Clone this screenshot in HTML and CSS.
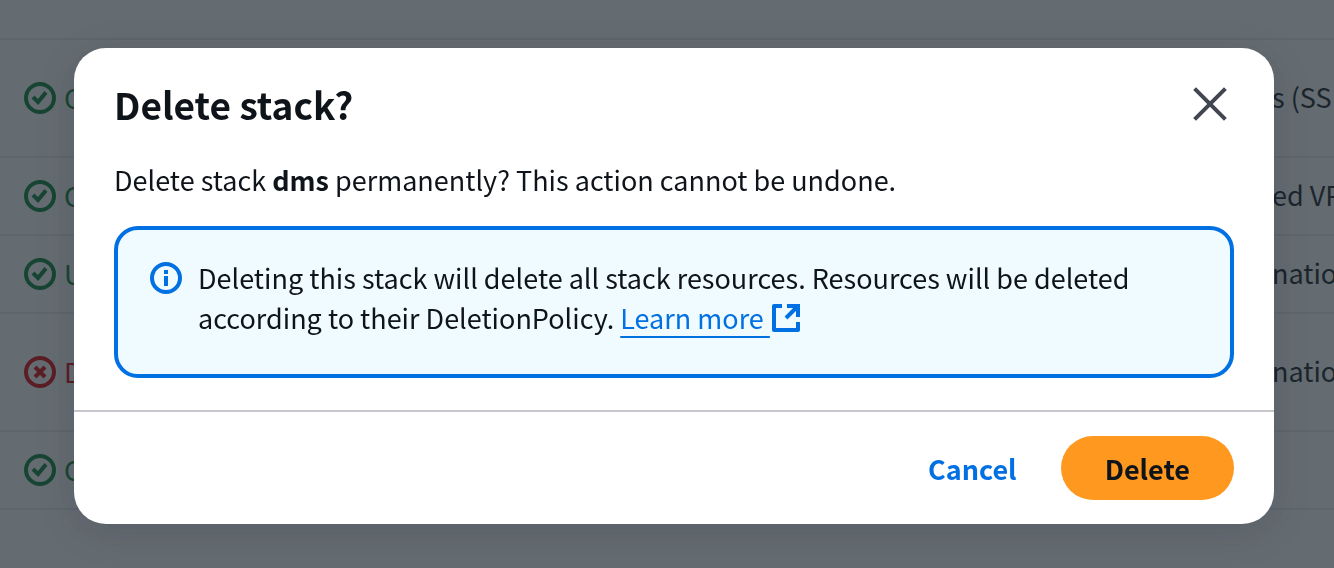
FILE: index.html
```html
<!DOCTYPE html>
<html lang="en">
<head>
    <meta charset="UTF-8">
    <meta name="viewport" content="width=device-width, initial-scale=1.0">
    <title>Delete stack</title>
    <link rel="stylesheet" href="styles.css">
</head>
<body>
    <svg class="sprite" aria-hidden="true">
        <symbol id="icon-success" viewBox="0 0 16 16">
            <circle cx="8" cy="8" r="7" />
            <path d="M4.5 7.5 L7 10 L11 5.2" />
        </symbol>
        <symbol id="icon-error" viewBox="0 0 16 16">
            <circle cx="8" cy="8" r="7" />
            <path d="M5.5 5.5 L10.5 10.5 M10.5 5.5 L5.5 10.5" />
        </symbol>
    </svg>

    <table class="stacks">
        <tbody>
            <tr class="tall">
                <td class="status success"><div><svg class="icon"><use href="#icon-success" /></svg>C</div></td>
                <td class="description">s (SS</td>
            </tr>
            <tr>
                <td class="status success"><div><svg class="icon"><use href="#icon-success" /></svg>C</div></td>
                <td class="description">ed VP</td>
            </tr>
            <tr>
                <td class="status success"><div><svg class="icon"><use href="#icon-success" /></svg>U</div></td>
                <td class="description">natio</td>
            </tr>
            <tr class="tall">
                <td class="status error"><div><svg class="icon"><use href="#icon-error" /></svg>D</div></td>
                <td class="description">natio</td>
            </tr>
            <tr>
                <td class="status success"><div><svg class="icon"><use href="#icon-success" /></svg>C</div></td>
                <td class="description"></td>
            </tr>
        </tbody>
    </table>

    <div class="overlay">
        <div class="modal" role="dialog" aria-modal="true" aria-labelledby="modal-title">
            <div class="modal-header">
                <h1 id="modal-title">Delete stack?</h1>
                <button type="button" class="close" aria-label="Close">
                    <svg class="icon" viewBox="0 0 16 16"><path d="M.3 .3 L15.7 15.7 M15.7 .3 L.3 15.7" /></svg>
                </button>
            </div>
            <div class="modal-body">
                <p>Delete stack <strong>dms</strong> permanently? This action cannot be undone.</p>
                <div class="alert">
                    <svg class="icon" viewBox="0 0 16 16">
                        <circle cx="8" cy="8" r="7" />
                        <path d="M8 4 V6 M8 7 V12" />
                    </svg>
                    <p>Deleting this stack will delete all stack resources. Resources will be deleted according to their DeletionPolicy. <a href="#">Learn more <svg class="external" viewBox="0 0 28 28">
                        <path d="M10 2 H2 V26 H26 V18" stroke-linejoin="round" />
                        <path d="M15 2 H26 V13 M25 3 L14 14" />
                    </svg></a></p>
                </div>
            </div>
            <div class="modal-footer">
                <button type="button" class="btn btn-link">Cancel</button>
                <button type="button" class="btn btn-primary">Delete</button>
            </div>
        </div>
    </div>
</body>
</html>
```
FILE: styles.css
```css
* {
    box-sizing: border-box;
}
body {
    margin: 0;
    min-height: 100vh;
    overflow: hidden;
    font-family: "Noto Sans CJK SC", "Noto Sans", sans-serif;
    font-size: 27px;
    line-height: 40px;
    color: #0f141a;
    background: #fff;
}
h1, p {
    margin: 0;
}
.sprite {
    display: none;
}
.icon {
    flex: none;
    width: 32px;
    height: 32px;
    fill: none;
    stroke: currentColor;
    stroke-width: 2;
}

/* stack list behind the dialog */
.stacks {
    width: 100%;
    margin-top: 38px;
    border-top: 2px solid #ebebf0;
    border-spacing: 0;
    table-layout: fixed;
}
.stacks td {
    height: 78px;
    padding: 0;
    border-bottom: 2px solid #ebebf0;
    white-space: nowrap;
    overflow: hidden;
}
.stacks .tall td {
    height: 118px;
}
.status div {
    display: flex;
    align-items: center;
    gap: 8px;
    padding-left: 24px;
}
.success {
    color: #00802f;
}
.error {
    color: #db0000;
}
.stacks .description {
    width: 62px;
    padding-bottom: 2px;
}

/* dialog */
.overlay {
    position: fixed;
    inset: 0;
    padding: 48px 60px 44px 74px;
    background: rgba(34, 44, 53, 0.7);
}
.modal {
    background: #fff;
    border-radius: 32px;
    box-shadow: 0 8px 40px rgba(0, 7, 22, 0.12);
}
.modal-header {
    display: flex;
    justify-content: space-between;
    align-items: center;
    padding: 32px 40px 24px;
}
.modal-header h1 {
    font-size: 37px;
    line-height: 48px;
}
.close {
    display: flex;
    padding: 8px;
    border: none;
    background: none;
    color: #424650;
    cursor: pointer;
}
.close .icon {
    overflow: visible;
}
.modal-body {
    padding: 8px 40px 32px;
}
.alert {
    display: flex;
    gap: 16px;
    margin-top: 26px;
    padding: 28px 32px 36px;
    border: 4px solid #0070e2;
    border-radius: 24px;
    background: #f0fbff;
}
.alert .icon {
    margin-top: 4px;
    color: #0070e2;
}
.alert a {
    color: #0070e2;
    text-decoration: underline;
    text-decoration-thickness: 2px;
    text-underline-offset: 7px;
}
.external {
    width: 28px;
    height: 28px;
    margin-left: 2px;
    vertical-align: -3px;
    fill: none;
    stroke: currentColor;
    stroke-width: 4;
}
.modal-footer {
    display: flex;
    justify-content: flex-end;
    gap: 16px;
    padding: 24px 40px;
    border-top: 2px solid #c6c6cd;
}
.btn {
    height: 64px;
    padding: 0 44px;
    border: none;
    border-radius: 32px;
    font-family: inherit;
    font-size: 27px;
    font-weight: bold;
    cursor: pointer;
}
.btn-link {
    padding: 0 28px;
    color: #0070e2;
    background: none;
}
.btn-primary {
    color: #0f141a;
    background: #ff981f;
}
```
